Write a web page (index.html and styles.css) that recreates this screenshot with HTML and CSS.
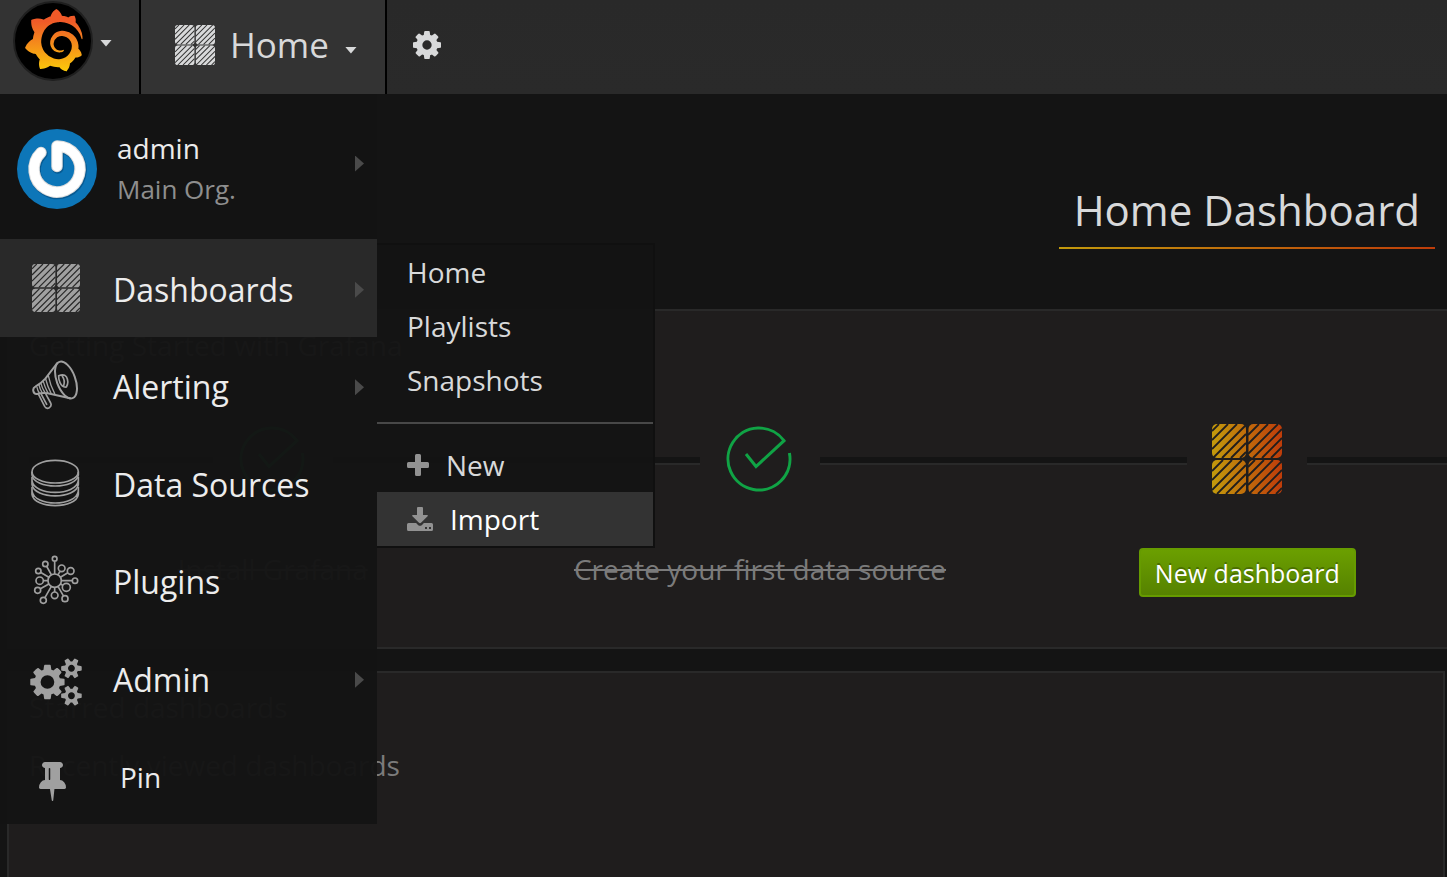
FILE: index.html
```html
<!DOCTYPE html>
<html lang="en">
<head>
<meta charset="utf-8">
<meta name="viewport" content="width=device-width, initial-scale=1">
<title>Grafana - Home</title>
<link rel="stylesheet" href="styles.css">
</head>
<body>
<svg class="defs" aria-hidden="true">
  <defs>
    <path id="hatch-a" d="M7 0L0 7M16 0L0 16M25 0L0 25M34 1L1 34M34 10L10 34M34 19L19 34M34 28L28 34"/>
    <path id="hatch-b" d="M11 0L0 11M20 0L0 20M30 0L0 30M34 5L5 34M34 14L14 34M34 23L23 34"/>
    <mask id="tiles" maskUnits="userSpaceOnUse" x="0" y="0" width="70" height="70">
      <g fill="#fff">
        <rect x="0" y="0" width="34" height="34" rx="5"/>
        <rect x="36.5" y="0" width="33.5" height="34" rx="5"/>
        <rect x="0" y="36" width="34" height="34" rx="5"/>
        <rect x="36.5" y="36" width="33.5" height="34" rx="5"/>
      </g>
      <g stroke="#000" stroke-width="1.8" fill="none">
        <use href="#hatch-a" x="0" y="0"/>
        <use href="#hatch-b" x="36" y="0"/>
        <use href="#hatch-b" x="0" y="36"/>
        <use href="#hatch-a" x="36" y="36"/>
      </g>
    </mask>
    <linearGradient id="brand" x1="0" y1="0" x2="1" y2="0">
      <stop offset="0" stop-color="#c29a0c"/>
      <stop offset="1" stop-color="#be3c0a"/>
    </linearGradient>
    <linearGradient id="flame" x1="0" y1="0" x2="0" y2="1">
      <stop offset="0.2" stop-color="#f05a28"/>
      <stop offset="1" stop-color="#fbca0a"/>
    </linearGradient>
    <symbol id="icon-tiles" viewBox="0 0 70 70">
      <rect width="70" height="70" fill="currentColor" mask="url(#tiles)"/>
    </symbol>
    <symbol id="icon-check" viewBox="0 0 66 66">
      <path d="M63.400 27A31 31 0 1 1 58 14.700L30 40.500L20 28" fill="none" stroke="currentColor" stroke-width="3"/>
    </symbol>
  </defs>
</svg>

<header class="topbar">
  <button class="topbar-cell brand" type="button" aria-label="Toggle menu">
    <svg class="brand-logo" viewBox="0 0 80 80" aria-hidden="true">
      <circle cx="40" cy="40" r="39" fill="#000" stroke="#1f1f1f" stroke-width="2"/>
      <g transform="translate(9.6 8) scale(2.6)">
        <path fill="url(#flame)" d="M23.02 10.59a8.578 8.578 0 0 0-.862-3.034 8.911 8.911 0 0 0-1.789-2.445c.337-1.342-.413-2.505-.413-2.505-1.292-.08-2.113.4-2.416.62-.052-.02-.102-.044-.154-.064-.22-.089-.446-.172-.677-.247-.231-.073-.47-.14-.711-.197a9.867 9.867 0 0 0-.875-.161C14.557.753 12.94 0 12.94 0c-1.804 1.145-2.147 2.744-2.147 2.744l-.018.093c-.098.029-.2.057-.298.088-.138.042-.275.094-.413.143-.138.055-.275.107-.41.166a8.869 8.869 0 0 0-1.557.87l-.063-.029c-2.497-.955-4.716.195-4.716.195-.203 2.658.996 4.33 1.235 4.636a11.608 11.608 0 0 0-.607 2.635C1.636 12.677.953 15.014.953 15.014c1.926 2.214 4.171 2.351 4.171 2.351.003-.002.006-.002.006-.005.285.509.615.994.986 1.446.156.19.32.371.488.548-.704 2.009.099 3.68.099 3.68 2.144.08 3.553-.937 3.849-1.173a9.784 9.784 0 0 0 3.164.501h.08l.055-.003.107-.002.103-.005.003.002c1.01 1.44 2.788 1.646 2.788 1.646 1.264-1.332 1.337-2.653 1.337-2.94v-.058c0-.02-.003-.039-.003-.06.265-.187.52-.387.758-.6a7.875 7.875 0 0 0 1.415-1.7c1.43.083 2.437-.885 2.437-.885-.236-1.49-1.085-2.216-1.264-2.354l-.018-.013-.016-.013a.217.217 0 0 1-.031-.02c.008-.092.016-.18.02-.27.011-.162.016-.323.016-.48v-.253l-.005-.098-.008-.135a1.891 1.891 0 0 0-.01-.13c-.003-.042-.008-.083-.013-.125l-.016-.124-.018-.122a6.215 6.215 0 0 0-2.032-3.73 6.015 6.015 0 0 0-3.222-1.46 6.292 6.292 0 0 0-.85-.048l-.107.002h-.063l-.044.003-.104.008a4.777 4.777 0 0 0-3.335 1.695c-.332.4-.592.84-.768 1.297a4.594 4.594 0 0 0-.312 1.817l.003.091c.005.055.007.11.013.164a3.615 3.615 0 0 0 .698 1.82 3.53 3.53 0 0 0 1.827 1.282c.33.098.66.14.971.137.039 0 .078 0 .114-.002l.063-.003c.02 0 .041-.003.062-.003.034-.002.065-.007.099-.01.007 0 .018-.003.028-.003l.031-.005.06-.008a1.18 1.18 0 0 0 .112-.02c.036-.008.072-.013.109-.024a2.634 2.634 0 0 0 .914-.415c.028-.02.056-.041.085-.065a.248.248 0 0 0 .039-.35.244.244 0 0 0-.309-.06l-.078.042c-.09.044-.184.083-.283.116a2.476 2.476 0 0 1-.475.096c-.028.003-.054.006-.083.006l-.083.002c-.026 0-.054 0-.08-.002l-.102-.006h-.012l-.024.006c-.016-.003-.031-.003-.044-.006-.031-.002-.06-.007-.091-.01a2.59 2.59 0 0 1-.724-.213 2.557 2.557 0 0 1-.667-.438 2.52 2.52 0 0 1-.805-1.475 2.306 2.306 0 0 1-.029-.444l.006-.122v-.023l.002-.031c.003-.021.003-.04.005-.06a3.163 3.163 0 0 1 1.352-2.29 3.12 3.12 0 0 1 .937-.43 2.946 2.946 0 0 1 .776-.101h.06l.07.002.045.003h.026l.07.005a4.041 4.041 0 0 1 1.635.49 3.94 3.94 0 0 1 1.602 1.662 3.77 3.77 0 0 1 .397 1.414l.005.076.003.075c.002.026.002.05.002.075 0 .024.003.052 0 .07v.065l-.002.073-.008.174a6.195 6.195 0 0 1-.08.639 5.1 5.1 0 0 1-.267.927 5.31 5.31 0 0 1-.624 1.13 5.052 5.052 0 0 1-3.237 2.014 4.82 4.82 0 0 1-.649.066l-.039.003h-.287a6.607 6.607 0 0 1-1.716-.265 6.776 6.776 0 0 1-3.4-2.274 6.75 6.75 0 0 1-.746-1.15 6.616 6.616 0 0 1-.714-2.596l-.005-.083-.002-.02v-.056l-.003-.073v-.096l-.003-.104v-.07l.003-.163c.008-.22.026-.45.054-.678a8.707 8.707 0 0 1 .28-1.355c.128-.444.286-.872.473-1.277a7.04 7.04 0 0 1 1.456-2.1 5.925 5.925 0 0 1 .953-.763c.169-.111.343-.213.524-.306.089-.05.182-.091.273-.135.047-.02.093-.042.138-.062a7.177 7.177 0 0 1 .714-.267l.145-.045c.049-.015.098-.026.148-.041.098-.029.197-.052.296-.076.049-.013.1-.02.15-.033l.15-.032.151-.028.076-.013.075-.01.153-.024c.057-.01.114-.013.171-.023l.169-.021c.036-.003.073-.008.106-.01l.073-.008.036-.003.042-.002c.057-.003.114-.008.171-.01l.086-.006h.023l.037-.003.145-.007a7.999 7.999 0 0 1 1.708.125 7.917 7.917 0 0 1 2.048.68 8.253 8.253 0 0 1 1.672 1.09l.09.077.089.078c.06.052.114.107.171.159.057.052.112.106.166.16.052.055.107.107.159.164a8.671 8.671 0 0 1 1.41 1.978c.012.026.028.052.04.078l.04.078.075.156c.023.051.05.1.07.153l.065.15a8.848 8.848 0 0 1 .45 1.34.19.19 0 0 0 .201.142.186.186 0 0 0 .172-.184c.01-.246.002-.532-.024-.856z"/>
      </g>
    </svg>
    <span class="caret"></span>
  </button>
  <button class="topbar-cell picker" type="button">
    <svg class="picker-icon" aria-hidden="true"><use href="#icon-tiles"/></svg>
    <span>Home</span>
    <span class="caret"></span>
  </button>
  <button class="topbar-settings" type="button" aria-label="Dashboard settings">
    <svg viewBox="0 128 1536 1536" aria-hidden="true"><path fill="currentColor" d="M1024 896q0-106-75-181t-181-75-181 75-75 181 75 181 181 75 181-75 75-181zm512-109v222q0 12-8 23t-20 13l-185 28q-19 54-39 91 35 50 107 138 10 12 10 25t-9 23q-27 37-99 108t-94 71q-12 0-26-9l-138-108q-44 23-91 38-16 136-29 186-7 28-36 28h-222q-14 0-24.500-8.500t-11.500-21.500l-28-184q-49-16-90-37l-141 107q-10 9-25 9-14 0-25-11-126-114-165-168-7-10-7-23 0-12 8-23 15-21 51-66.500t54-70.500q-27-50-41-99l-183-27q-13-2-21-12.500t-8-23.500v-222q0-12 8-23t19-13l186-28q14-46 39-92-40-57-107-138-10-12-10-24 0-10 9-23 26-36 98.500-107.500t94.500-71.500q13 0 26 10l138 107q44-23 91-38 16-136 29-186 7-28 36-28h222q14 0 24.500 8.500t11.500 21.500l28 184q49 16 90 37l142-107q9-9 24-9 13 0 25 10 129 119 165 170 7 8 7 22 0 12-8 23-15 21-51 66.500t-54 70.500q26 50 41 98l183 28q13 2 21 12.500t8 23.500z"/></svg>
  </button>
</header>

<div class="page">
  <main class="dashboard">
    <h1 class="dashboard-title">Home Dashboard</h1>

    <section class="panel getting-started">
      <h2 class="panel-heading">Getting Started with Grafana</h2>
      <ol class="steps">
        <li class="step">
          <div class="step-track"><svg class="step-check" aria-hidden="true"><use href="#icon-check"/></svg></div>
          <div class="step-label done">Install Grafana</div>
        </li>
        <li class="step">
          <div class="step-track"><svg class="step-check" aria-hidden="true"><use href="#icon-check"/></svg></div>
          <div class="step-label done">Create your first data source</div>
        </li>
        <li class="step">
          <div class="step-track"><svg class="step-tiles" viewBox="0 0 70 70" aria-hidden="true"><rect width="70" height="70" fill="url(#brand)" mask="url(#tiles)"/></svg></div>
          <div class="step-label"><button class="btn-success" type="button">New dashboard</button></div>
        </li>
      </ol>
    </section>

    <section class="panel lists">
      <h2 class="panel-heading">Starred dashboards</h2>
      <h2 class="panel-heading">Recently viewed dashboards</h2>
    </section>
  </main>

  <nav class="sidemenu" aria-label="Main">
    <a class="profile" href="#">
      <svg class="avatar" viewBox="0 0 80 80" aria-hidden="true">
        <circle cx="40" cy="40" r="40" fill="#0d76b8"/>
        <path d="M24 23.500A23 23 0 1 0 40 17V37.500" transform="translate(0.800 1.200)" fill="none" stroke="#075a92" stroke-width="12" stroke-linecap="round" stroke-linejoin="round"/>
        <path d="M24 23.500A23 23 0 1 0 40 17V37.500" fill="none" stroke="#dcdcdc" stroke-width="11.500" stroke-linecap="round" stroke-linejoin="round"/>
        <path d="M24 23.500A23 23 0 1 0 40 17V37.500" fill="none" stroke="#fff" stroke-width="9.500" stroke-linecap="round" stroke-linejoin="round"/>
      </svg>
      <span class="profile-text"><span class="profile-name">admin</span><span class="profile-org">Main Org.</span></span>
      <span class="arrow"></span>
    </a>
    <ul class="menu">
      <li class="menu-item active">
        <a class="menu-link" href="#">
          <span class="menu-icon"><svg width="48" height="48" aria-hidden="true"><use href="#icon-tiles"/></svg></span>
          <span>Dashboards</span><span class="arrow"></span>
        </a>
        <ul class="submenu">
          <li><a href="#">Home</a></li>
          <li><a href="#">Playlists</a></li>
          <li><a href="#">Snapshots</a></li>
          <li class="divider" role="separator"></li>
          <li><a href="#"><svg width="22" height="22" viewBox="0 0 22 22" aria-hidden="true"><path fill="currentColor" d="M9.500 0h3q1.500 0 1.500 1.500V8h6.500q1.500 0 1.500 1.500v3q0 1.500-1.500 1.500H14v6.500q0 1.500-1.500 1.500h-3Q8 22 8 20.500V14H1.500Q0 14 0 12.500v-3Q0 8 1.500 8H8V1.500Q8 0 9.500 0z"/></svg>New</a></li>
          <li><a class="hover" href="#"><svg class="icon-import" width="26" height="24" viewBox="0 0 26 24" aria-hidden="true"><path fill="currentColor" fill-rule="evenodd" d="M11 0h4q1 0 1 1v7h4q1.500 0 .6 1.300l-6.600 6.500q-1 .8-2 0L5.400 9.300Q4.500 8 6 8h4V1q0-1 1-1zM1.500 16h7.600l1.900 1.900q2 1.700 4 0l1.900-1.900h7.600Q26 16 26 17.500v5q0 1.500-1.500 1.500h-23Q0 24 0 22.500v-5Q0 16 1.500 16zM18 20v2h2v-2zM22 20v2h2v-2z"/></svg>Import</a></li>
        </ul>
      </li>
      <li class="menu-item">
        <a class="menu-link" href="#">
          <span class="menu-icon"><svg width="48" height="50" viewBox="97 375 144 150" fill="none" stroke="currentColor" stroke-width="6" stroke-linejoin="round" stroke-linecap="round" aria-hidden="true">
            <ellipse cx="199" cy="435" rx="28" ry="58" transform="rotate(-20 199 435)"/>
            <path d="M173 384L137 431Q124 446 107 455Q99 459 101 468Q103 478 112 477Q128 473 144 475L211 490"/>
            <path d="M112 457Q114 467 119 474M118 450Q121 463 127 472M124 446Q128 461 135 471M131 440Q136 458 144 472M138 432Q144 456 154 474M146 422Q152 452 165 476" stroke-width="4"/>
            <path d="M177 422Q193 416 200 425Q209 441 200 456Q188 458 181 443Q176 432 177 422zM188 424Q197 437 192 452" stroke-width="5"/>
            <path d="M117 479L135 514Q140 523 149 518Q157 512 153 504L139 478M125 478L141 508" stroke-width="5"/>
          </svg></span>
          <span>Alerting</span><span class="arrow"></span>
        </a>
      </li>
      <li class="menu-item">
        <a class="menu-link" href="#">
          <span class="menu-icon"><svg width="50" height="48" viewBox="92 72 150 144" fill="none" stroke="currentColor" stroke-width="5" aria-hidden="true">
            <ellipse cx="164.500" cy="110" rx="69.500" ry="34"/>
            <path d="M95 110V120C101 164 228 164 234 120V110"/>
            <path d="M95 126V137C101 184 228 184 234 137V126M95 137V148C101 194 228 194 234 148V137"/>
            <path d="M95 156V168C101 216 228 216 234 168V156M95 167V178C101 223 228 223 234 178V167"/>
          </svg></span>
          <span>Data Sources</span>
        </a>
      </li>
      <li class="menu-item">
        <a class="menu-link" href="#">
          <span class="menu-icon"><svg width="48" height="50" viewBox="96 360 144 150" fill="none" stroke="currentColor" stroke-width="5" aria-hidden="true">
            <path d="M164 437V371M164 437L136 387M164 437L115 408M164 437H119M164 437L113 466M164 437L130 496M164 437V481M164 437L195 491M164 437L199 457M164 437H225M164 437L212 408M164 437L185 400"/>
            <g fill="#141414">
              <circle cx="164" cy="437" r="20"/><circle cx="164" cy="371" r="7"/><circle cx="136" cy="387" r="8"/><circle cx="115" cy="408" r="8"/><circle cx="119" cy="437" r="11"/><circle cx="113" cy="466" r="9"/><circle cx="130" cy="496" r="9"/><circle cx="164" cy="481" r="10"/><circle cx="195" cy="491" r="9"/><circle cx="199" cy="457" r="12"/><circle cx="225" cy="437" r="8"/><circle cx="212" cy="408" r="10"/><circle cx="185" cy="400" r="10"/>
            </g>
          </svg></span>
          <span>Plugins</span>
        </a>
      </li>
      <li class="menu-item">
        <a class="menu-link" href="#">
          <span class="menu-icon solid"><svg width="52" height="48" viewBox="0 64 1920 1792" aria-hidden="true"><path fill="currentColor" d="M896 960q0-106-75-181t-181-75-181 75-75 181 75 181 181 75 181-75 75-181zm768 512q0-52-38-90t-90-38-90 38-38 90q0 53 37.500 90.500t90.500 37.500 90.500-37.500 37.500-90.500zm0-1024q0-52-38-90t-90-38-90 38-38 90q0 53 37.500 90.500t90.500 37.500 90.500-37.500 37.500-90.500zm-384 421v185q0 10-7 19.500t-16 10.500l-155 24q-11 35-32 76 34 48 90 115 7 11 7 20 0 12-7 19-23 30-82.500 89.500t-78.500 59.500q-11 0-21-7l-115-90q-37 19-77 31-11 108-23 155-7 24-30 24h-186q-11 0-20-7.500t-10-17.500l-23-153q-34-10-75-31l-118 89q-7 7-20 7-11 0-21-8-144-133-144-160 0-9 7-19 10-14 41-53t47-61q-23-44-35-82l-152-24q-10-1-17-9.500t-7-19.500v-185q0-10 7-19.500t16-10.500l155-24q11-35 32-76-34-48-90-115-7-11-7-20 0-12 7-20 22-30 82-89t79-59q11 0 21 7l115 90q34-18 77-32 11-108 23-154 7-24 30-24h186q11 0 20 7.500t10 17.500l23 153q34 10 75 31l118-89q8-7 20-7 11 0 21 8 144 133 144 160 0 8-7 19-12 16-42 54t-45 60q23 48 34 82l152 23q10 2 17 10.500t7 19.500zm640 533v140q0 16-149 31-12 27-30 52 51 113 51 138 0 4-4 7-122 71-124 71-8 0-46-47t-52-68q-20 2-30 2t-30-2q-14 21-52 68t-46 47q-2 0-124-71-4-3-4-7 0-25 51-138-18-25-30-52-149-15-149-31v-140q0-16 149-31 13-29 30-52-51-113-51-138 0-4 4-7 4-2 35-20t59-34 30-16q8 0 46 46.500t52 67.500q20-2 30-2t30 2q51-71 92-112l6-2q4 0 124 70 4 3 4 7 0 25-51 138 17 23 30 52 149 15 149 31zm0-1024v140q0 16-149 31-12 27-30 52 51 113 51 138 0 4-4 7-122 71-124 71-8 0-46-47t-52-68q-20 2-30 2t-30-2q-14 21-52 68t-46 47q-2 0-124-71-4-3-4-7 0-25 51-138-18-25-30-52-149-15-149-31v-140q0-16 149-31 13-29 30-52-51-113-51-138 0-4 4-7 4-2 35-20t59-34 30-16q8 0 46 46.500t52 67.500q20-2 30-2t30 2q51-71 92-112l6-2q4 0 124 70 4 3 4 7 0 25-51 138 17 23 30 52 149 15 149 31z"/></svg></span>
          <span>Admin</span><span class="arrow"></span>
        </a>
      </li>
      <li class="menu-item">
        <button class="menu-link pin" type="button">
          <span class="menu-icon solid"><svg width="27" height="39" viewBox="0 128 1152 1664" aria-hidden="true"><path fill="currentColor" d="M480 864v-448q0-14-9-23t-23-9-23 9-9 23v448q0 14 9 23t23 9 23-9 9-23zm672 352q0 26-19 45t-45 19h-429l-51 483q-2 12-10.500 20.500t-20.500 8.500h-1q-27 0-32-27l-76-485h-404q-26 0-45-19t-19-45q0-123 78.500-221.500t177.500-98.500v-512q-52 0-90-38t-38-90 38-90 90-38h640q52 0 90 38t38 90-38 90-90 38v512q99 0 177.500 98.500t78.500 221.500z"/></svg></span>
          <span>Pin</span>
        </button>
      </li>
    </ul>
  </nav>
</div>
</body>
</html>
```
FILE: styles.css
```css
* {
  box-sizing: border-box;
}

body {
  display: flex;
  flex-direction: column;
  min-height: 100vh;
  margin: 0;
  overflow: hidden;
  background: #141414;
  color: #d8d9da;
  font-family: "Open Sans", sans-serif;
  font-size: 28px;
  line-height: 38px;
}

a {
  color: inherit;
  text-decoration: none;
}

button {
  margin: 0;
  padding: 0;
  border: 0;
  background: none;
  color: inherit;
  font: inherit;
  cursor: pointer;
}

ul,
ol {
  margin: 0;
  padding: 0;
  list-style: none;
}

svg {
  flex: none;
}

.defs {
  position: absolute;
  width: 0;
  height: 0;
}

/* Top navigation bar */

.topbar {
  display: flex;
  height: 94px;
  background: linear-gradient(#292929, #2a2a2a);
}

.topbar-cell {
  display: flex;
  align-items: center;
  border-right: 2px solid #000;
  background: #333;
}

.caret {
  width: 12px;
  height: 7px;
  background: currentColor;
  clip-path: polygon(0 0, 100% 0, 50% 100%);
}

.brand {
  gap: 7px;
  padding: 0 27px 12px 13px;
}

.brand .caret {
  margin-top: 4px;
}

.brand-logo {
  width: 80px;
  height: 80px;
}

.picker {
  gap: 15px;
  padding: 0 28px 4px 34px;
  font-size: 35px;
}

.picker .caret {
  margin-top: 10px;
  margin-left: 1px;
}

.picker-icon {
  width: 40px;
  height: 40px;
}

.topbar-settings {
  padding: 0 26px 4px;
  line-height: 0;
}

.topbar-settings svg {
  width: 28px;
  height: 28px;
}

/* Dashboard */

.page {
  position: relative;
  display: flex;
  flex: 1;
}

.dashboard {
  display: flex;
  flex: 1;
  flex-direction: column;
  min-width: 0;
  padding: 88px 2px 0 7px;
}

.dashboard-title {
  align-self: flex-end;
  margin: 0 10px 60px 0;
  padding: 0 15px 9px;
  border-bottom: 2px solid;
  border-image: linear-gradient(90deg, #c29a0c, #be3c0a) 1;
  font-size: 42px;
  font-weight: 400;
  line-height: 56px;
}

.panel {
  padding: 15px 20px 0;
  border: 2px solid #292929;
  background: #1f1d1d;
}

.panel-heading {
  margin: 0 0 20px;
  color: #7b7b7b;
  font-size: 28px;
  font-weight: 400;
  line-height: 38px;
}

.getting-started {
  margin: 0 -68px 22px 0;
  padding-bottom: 50px;
}

.getting-started .panel-heading {
  margin-bottom: 60px;
}

.lists {
  flex: 1;
  min-height: 230px;
}

.steps {
  display: flex;
}

.step {
  flex: 1;
  text-align: center;
}

.step-track {
  display: flex;
  justify-content: center;
  height: 74px;
  margin-bottom: 50px;
}

.step-track::before,
.step-track::after {
  flex: 1;
  align-self: center;
  height: 6px;
  border-bottom: 2px solid #292929;
  background: #141414;
  content: "";
}

.step-track svg {
  height: 70px;
}

.step-track .step-check {
  width: 66px;
  height: 66px;
  margin: 2px 28px 0 26px;
  color: #10a345;
}

.step-tiles {
  width: 70px;
  margin: 0 25px;
}

.step-label {
  height: 49px;
  color: #7b7b7b;
  line-height: 42px;
}

.step-label.done {
  text-decoration: line-through;
}

.btn-success {
  height: 49px;
  padding: 0 14px;
  border: 2px solid #669b00;
  border-radius: 4px;
  background: linear-gradient(#6b9f00, #568200);
  color: #fff;
  font-size: 25px;
  text-shadow: 0 -2px 0 rgba(0, 0, 0, 0.25);
}

/* Side menu */

.sidemenu {
  position: absolute;
  top: 0;
  left: 0;
  width: 377px;
  background: rgba(20, 20, 20, 0.97);
}

.arrow {
  width: 9px;
  height: 16px;
  margin-left: auto;
  background: #4a4a4a;
  clip-path: polygon(0 0, 100% 50%, 0 100%);
}

.profile {
  display: flex;
  align-items: center;
  height: 145px;
  padding: 4px 13px 0 17px;
}

.avatar {
  width: 80px;
  height: 80px;
}

.profile-text {
  display: flex;
  flex-direction: column;
  gap: 3px;
  padding-left: 20px;
}

.profile-name {
  color: #ececec;
}

.profile-org {
  color: #8e8e8e;
  font-size: 26px;
}

.profile .arrow {
  margin-bottom: 10px;
}

.menu {
  display: grid;
  grid-auto-rows: 1fr;
  height: 585px;
}

.menu-item {
  position: relative;
}

.menu-item.active {
  background: #292929;
}

.menu-link {
  display: flex;
  align-items: center;
  width: 100%;
  height: 100%;
  padding: 4px 13px 0 30px;
  color: #ececec;
  font-size: 32px;
}

.menu-icon {
  display: flex;
  justify-content: center;
  width: 52px;
  margin: 0 31px 4px 0;
  color: #a0a0a0;
}

.menu-icon.solid {
  margin-top: 4px;
  margin-bottom: 0;
}

.pin {
  font-size: 28px;
}

.pin .menu-icon {
  width: 45px;
  margin-top: 8px;
  margin-right: 45px;
}

.submenu {
  position: absolute;
  top: 4px;
  left: 377px;
  width: 278px;
  border: 2px solid #101010;
  border-left: 0;
  background: rgba(20, 20, 20, 0.97);
}

.submenu a {
  display: flex;
  align-items: center;
  gap: 17px;
  height: 54px;
  padding: 0 30px;
}

.submenu svg {
  color: #929292;
}

.submenu .hover {
  background: #333;
  color: #fff;
}

.submenu .divider {
  height: 2px;
  margin: 15px 0 14px;
  background: #484848;
}
```
